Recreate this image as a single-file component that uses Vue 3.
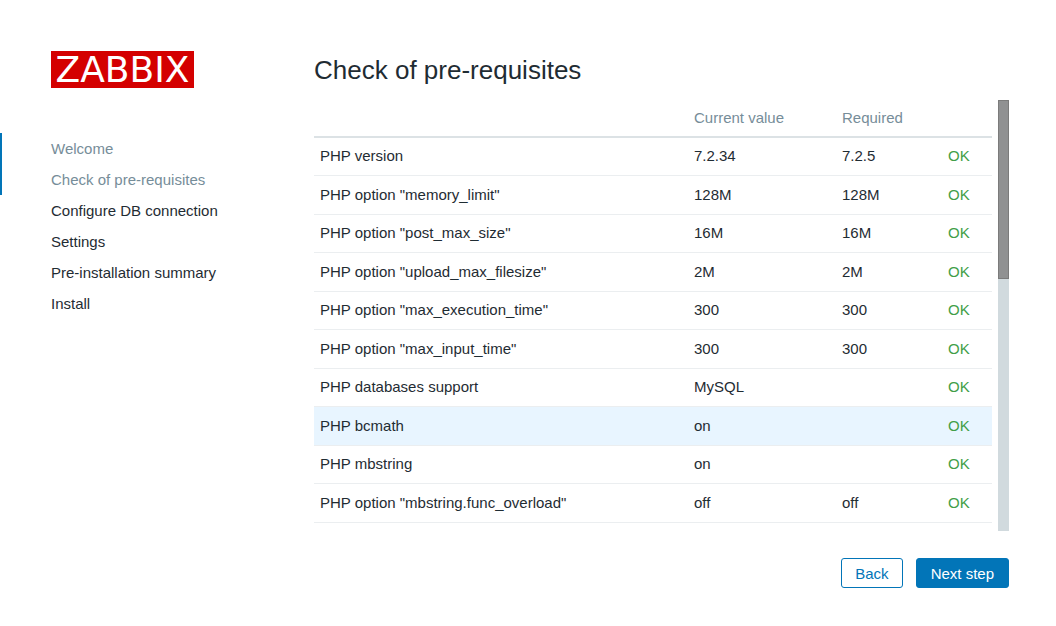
<template>
  <div class="setup">
    <aside class="setup-left">
      <div class="logo">ZABBIX</div>
      <ul class="steps">
        <li v-for="(step, i) in steps" :key="step" :class="{ reached: i <= currentStep }">{{ step }}</li>
      </ul>
    </aside>

    <main class="setup-right">
      <h1>Check of pre-requisites</h1>

      <div class="body">
        <div class="table-wrap">
          <table>
            <thead>
              <tr>
                <th class="col-name"></th>
                <th class="col-current">Current value</th>
                <th class="col-required">Required</th>
                <th class="col-status"></th>
              </tr>
            </thead>
            <tbody>
              <tr v-for="row in rows" :key="row.name" :class="{ active: row.name === activeRow }">
                <td>{{ row.name }}</td>
                <td>{{ row.current }}</td>
                <td>{{ row.required }}</td>
                <td class="ok">OK</td>
              </tr>
            </tbody>
          </table>
        </div>
        <div class="scroll-track">
          <div class="scroll-thumb"></div>
        </div>
      </div>

      <div class="footer">
        <button type="button" class="btn btn-alt" @click="back">Back</button>
        <button type="button" class="btn" @click="next">Next step</button>
      </div>
    </main>
  </div>
</template>

<script setup>
import { ref } from 'vue'

const steps = [
  'Welcome',
  'Check of pre-requisites',
  'Configure DB connection',
  'Settings',
  'Pre-installation summary',
  'Install'
]

const rows = [
  { name: 'PHP version', current: '7.2.34', required: '7.2.5' },
  { name: 'PHP option "memory_limit"', current: '128M', required: '128M' },
  { name: 'PHP option "post_max_size"', current: '16M', required: '16M' },
  { name: 'PHP option "upload_max_filesize"', current: '2M', required: '2M' },
  { name: 'PHP option "max_execution_time"', current: '300', required: '300' },
  { name: 'PHP option "max_input_time"', current: '300', required: '300' },
  { name: 'PHP databases support', current: 'MySQL', required: '' },
  { name: 'PHP bcmath', current: 'on', required: '' },
  { name: 'PHP mbstring', current: 'on', required: '' },
  { name: 'PHP option "mbstring.func_overload"', current: 'off', required: 'off' }
]

const currentStep = ref(1)
const activeRow = ref('PHP bcmath')

const back = () => {
  if (currentStep.value > 0) currentStep.value--
}

const next = () => {
  if (currentStep.value < steps.length - 1) currentStep.value++
}
</script>

<style>
body {
  background: #fff;
}
</style>

<style scoped>
.setup {
  display: flex;
  font-family: Arial, "Liberation Sans", sans-serif;
  font-size: 15px;
  line-height: 18px;
  color: #1f2c33;
}

.setup-left {
  flex: 0 0 314px;
  padding-top: 51px;
}

.logo {
  width: 143px;
  margin-left: 51px;
  background: #d40000;
  color: #fff;
  font-family: "DejaVu Sans", sans-serif;
  font-size: 36px;
  line-height: 37px;
  text-align: center;
}

.steps {
  list-style: none;
  margin: 45px 0 0;
  padding: 0;
}

.steps li {
  padding-left: 49px;
  border-left: 2px solid transparent;
  line-height: 31px;
}

.steps li.reached {
  color: #768d99;
  border-left-color: #0275b8;
}

.setup-right {
  flex: 1;
  min-width: 0;
  padding: 55px 47px 38px 0;
}

h1 {
  margin: 0 0 15px;
  font-size: 26px;
  font-weight: normal;
  line-height: 30px;
}

.body {
  display: flex;
  gap: 6px;
}

.table-wrap {
  flex: 1;
  padding-bottom: 8px;
}

table {
  width: 100%;
  border-collapse: separate;
  border-spacing: 0;
  table-layout: fixed;
}

th,
td {
  box-sizing: border-box;
  height: 38px;
  padding: 0 6px;
  text-align: left;
  font-weight: normal;
  border-bottom: 1px solid #ebeef0;
}

td {
  padding-bottom: 1px;
}

tbody tr:nth-child(even) td {
  height: 39px;
}

th {
  color: #768d99;
  border-bottom: 2px solid #dce2e5;
}

.col-current {
  width: 148px;
}

.col-required {
  width: 106px;
}

.col-status {
  width: 50px;
}

.active td {
  background: #e8f5ff;
}

.ok {
  color: #429e47;
}

.scroll-track {
  width: 11px;
  background: #d1dade;
}

.scroll-thumb {
  box-sizing: border-box;
  height: 179px;
  background: #909192;
  border: 1px solid #7b7b7b;
}

.footer {
  display: flex;
  justify-content: flex-end;
  gap: 13px;
  margin-top: 27px;
}

.btn {
  height: 30px;
  padding: 2px 14px 0;
  border: 1px solid #0275b8;
  border-radius: 3px;
  background: #0275b8;
  color: #fff;
  font: inherit;
  cursor: pointer;
}

.btn-alt {
  padding: 2px 13px 0;
  background: #fff;
  color: #0275b8;
}
</style>
